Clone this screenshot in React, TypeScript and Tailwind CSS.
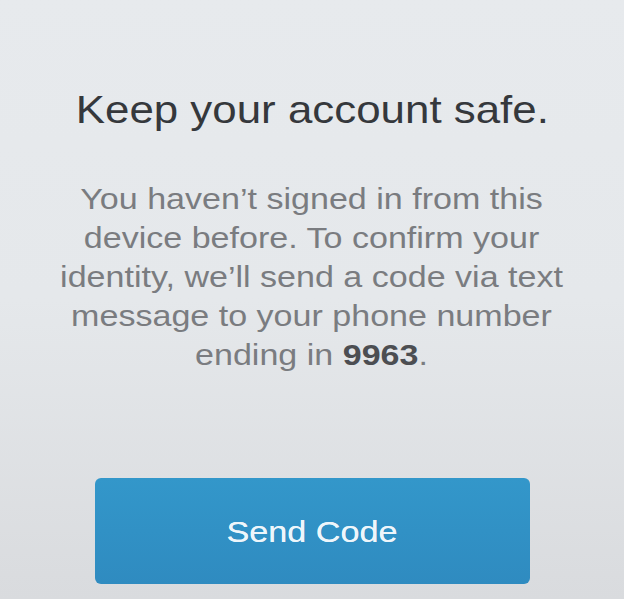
export default function App() {
    return (
        <div className="h-[599px] w-[624px] overflow-hidden bg-gradient-to-b from-[#e7eaed] via-[#e5e8eb] to-[#d9dbde] font-['Liberation_Sans',Arial,sans-serif]">
            <div className="flex flex-col items-center pt-[88px]">
                {/* Heading (the capture is stretched wide, hence scale-x) */}
                <h1 className="scale-x-[1.125] whitespace-nowrap text-[39px] leading-[44px] text-[#35383c]">
                    Keep your account safe.
                </h1>

                {/* Explanation */}
                <p className="mt-[47px] scale-x-[1.135] whitespace-nowrap text-center text-[30px] leading-[39px] text-[#7a7c80]">
                    You haven’t signed in from this
                    <br />
                    device before. To confirm your
                    <br />
                    identity, we’ll send a code via text
                    <br />
                    message to your phone number
                    <br />
                    ending in <span className="font-bold text-[#4c4e52]">9963</span>.
                </p>

                {/* Action */}
                <button className="mt-[104px] flex h-[106px] w-[435px] items-center justify-center rounded-[6px] bg-gradient-to-b from-[#3397ca] to-[#2f8bc0]">
                    <span className="scale-x-[1.14] text-[30px] text-[#eef6fb] [text-shadow:0_0_0.6px_#eef6fb]">Send Code</span>
                </button>
            </div>
        </div>
    );
}
